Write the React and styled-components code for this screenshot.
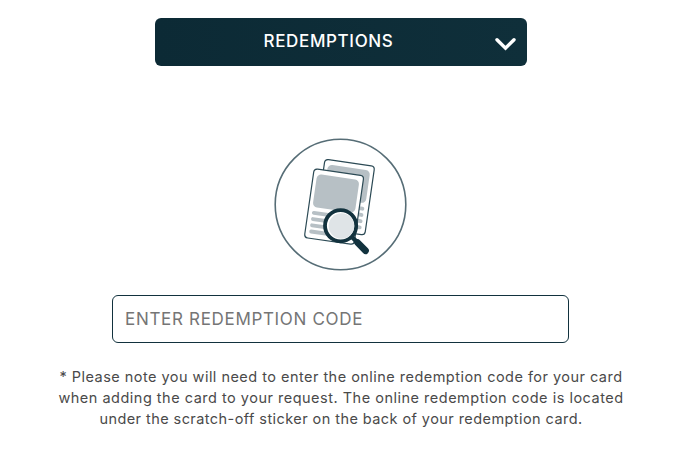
import React, { useState } from "react";
import styled, { createGlobalStyle } from "styled-components";

const GlobalStyle = createGlobalStyle`
  * {
    box-sizing: border-box;
  }
  body {
    margin: 0;
    background: #fff;
    font-family: "Inter", "Open Sans", sans-serif;
  }
`;

const Container = styled.main`
  display: flex;
  flex-direction: column;
  align-items: center;
  width: 682px;
  padding-top: 18px;
`;

const Dropdown = styled.button`
  display: flex;
  align-items: center;
  width: 372px;
  height: 48px;
  padding: 0 10px 0 0;
  border: none;
  border-radius: 6px;
  background: linear-gradient(90deg, #0c2a35, #0f2f3a);
  color: #fff;
  cursor: pointer;
`;

const DropdownLabel = styled.span`
  flex: 1;
  padding: 0 0 3px 8px;
  font-family: "Inter", sans-serif;
  font-size: 17px;
  font-weight: 500;
  line-height: 24px;
  letter-spacing: 0.65px;
  text-align: center;
`;

const Chevron = styled.svg`
  width: 23px;
  height: 16px;
  margin-top: 4px;
`;

const CardIcon = styled.svg`
  width: 134px;
  height: 134px;
  margin-top: 72px;
`;

const CodeInput = styled.input`
  width: 457px;
  height: 48px;
  margin: 23px 0 0 -1px;
  padding: 0 12px;
  border: 1px solid #12323e;
  border-radius: 6px;
  background: #fff;
  color: #12323e;
  font-family: "Inter", sans-serif;
  font-size: 17px;
  letter-spacing: 0.68px;
  outline: none;
  &::placeholder {
    color: #757575;
    opacity: 1;
  }
`;

const Note = styled.p`
  display: flex;
  flex-direction: column;
  align-items: center;
  margin: 23px 0 0;
  color: #4a4a4a;
  font-size: 14.5px;
  line-height: 21px;
`;

const NoteLine = styled.span`
  letter-spacing: ${(props) => props.$spacing};
  white-space: nowrap;
`;

const Card = ({ x, y }) => (
  <g transform={`translate(${x} ${y}) rotate(8.2)`}>
    <rect
      width="50.2"
      height="69.5"
      rx="3.5"
      fill="#fff"
      stroke="#2c4a55"
      strokeWidth="1.2"
    />
    <rect x="3.7" y="4.8" width="42.8" height="33.2" rx="4.5" fill="#b7c0c5" />
    {[43.5, 49.8, 56.1, 62.4].map((top) => (
      <rect
        key={top}
        x="4"
        y={top - 1.7}
        width="42"
        height="3.8"
        rx="1.9"
        fill="#b7c0c5"
      />
    ))}
  </g>
);

const App = () => {
  const [code, setCode] = useState("");

  return (
    <>
      <GlobalStyle />
      <Container>
        <Dropdown type="button">
          <DropdownLabel>REDEMPTIONS</DropdownLabel>
          <Chevron viewBox="0 0 23 16" fill="none">
            <path
              d="M3 3.7 11.5 12.2 20 3.7"
              stroke="#fff"
              strokeWidth="3.4"
              strokeLinecap="round"
            />
          </Chevron>
        </Dropdown>

        <CardIcon viewBox="0 0 134 134" fill="none">
          <circle cx="66.5" cy="66.5" r="65.3" stroke="#566d76" strokeWidth="1.6" />
          <Card x={51} y={21.2} />
          <Card x={40.2} y={30.7} />
          <path d="M78 99 L84 105" stroke="#12323e" strokeWidth="4.5" />
          <path
            d="M83.5 104.5 L91.5 112.7"
            stroke="#12323e"
            strokeWidth="6.8"
            strokeLinecap="round"
          />
          <circle
            cx="66.6"
            cy="87.7"
            r="15.6"
            fill="#fff"
            stroke="#12323e"
            strokeWidth="3.8"
          />
          <circle cx="67.4" cy="88" r="12.8" fill="#dfe4e7" />
        </CardIcon>

        <CodeInput
          type="text"
          value={code}
          placeholder="ENTER REDEMPTION CODE"
          onChange={(e) => setCode(e.target.value)}
        />

        <Note>
          <NoteLine $spacing="0.47px">
            * Please note you will need to enter the online redemption code for
            your card
          </NoteLine>
          <NoteLine $spacing="0.5px">
            when adding the card to your request. The online redemption code is
            located
          </NoteLine>
          <NoteLine $spacing="0.43px">
            under the scratch-off sticker on the back of your redemption card.
          </NoteLine>
        </Note>
      </Container>
    </>
  );
};

export default App;
